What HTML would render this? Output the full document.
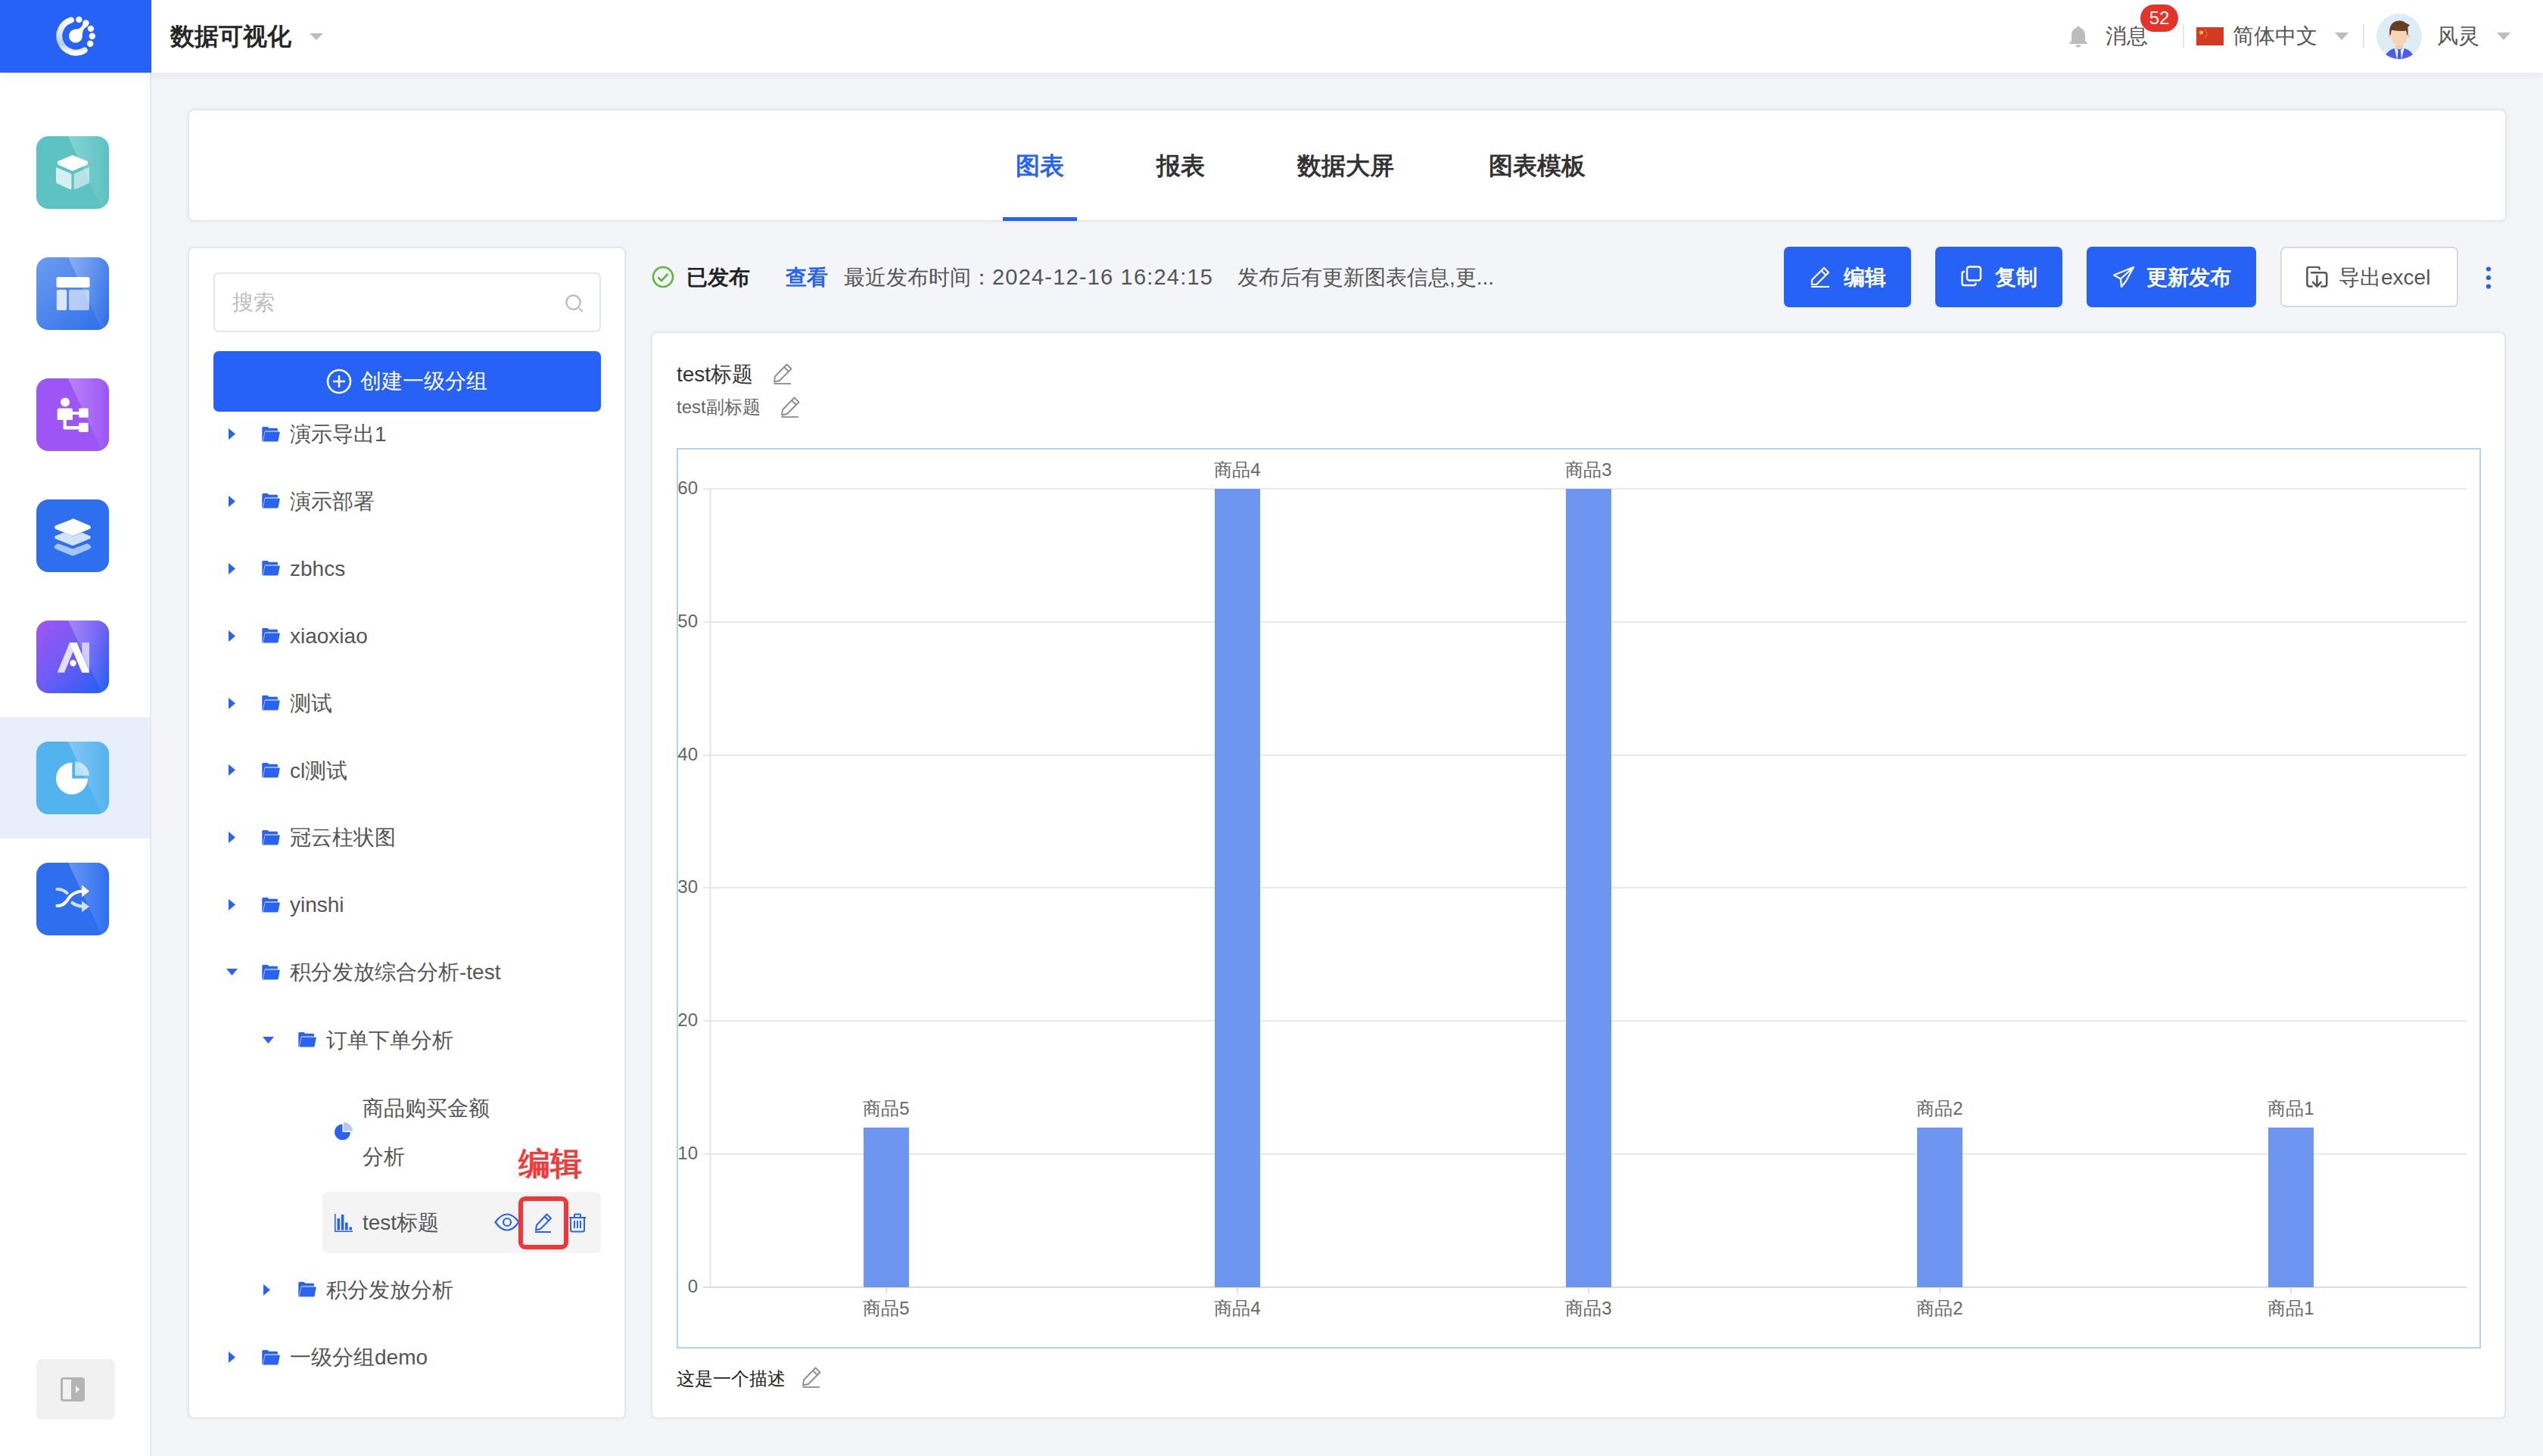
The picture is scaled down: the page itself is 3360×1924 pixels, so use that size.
<!DOCTYPE html>
<html><head><meta charset="utf-8">
<style>
*{box-sizing:border-box;margin:0;padding:0}
html,body{width:3360px;height:1924px;overflow:hidden}
body{background:#f3f5f8;font-family:"Liberation Sans",sans-serif;color:#333;position:relative}
.abs{position:absolute}
#hdr{left:0;top:0;width:3360px;height:96px;background:#fff;box-shadow:0 2px 14px rgba(30,40,70,0.08);z-index:5}
#logo{left:0;top:0;width:200px;height:96px;background:#2562f5}
#side{left:0;top:96px;width:200px;height:1828px;background:#fff;border-right:2px solid #e3e7ee;z-index:2}
.ico{position:absolute;left:48px;width:96px;height:96px}
.card{position:absolute;background:#fff;border:2px solid #e4e7ee;border-radius:8px;box-shadow:0 0 6px rgba(40,50,80,0.04)}
.t{position:absolute;white-space:nowrap;line-height:1}
</style></head><body>

<div id="hdr" class="abs">
  <div id="logo" class="abs">
    <svg class="abs" style="left:0;top:0" width="200" height="96" viewBox="0 0 200 96">
      <defs><linearGradient id="lg" x1="0" y1="0" x2="0" y2="1"><stop offset="0" stop-color="#fff"/><stop offset="0.75" stop-color="#b9cff7"/><stop offset="1" stop-color="#fff"/></linearGradient></defs>
      <path d="M94 26.5 A22 22 0 1 0 111.7 66.4" fill="none" stroke="url(#lg)" stroke-width="8" stroke-linecap="round"/>
      <circle cx="100" cy="47.6" r="9" fill="#fff"/>
      <path d="M98 39 Q107 39 109.8 31.5 L116.5 34.5 Q109 37 108.8 46 Z" fill="#fff"/>
      <circle cx="113.5" cy="30.4" r="4.2" fill="#fff"/>
      <circle cx="104.4" cy="25.9" r="4.2" fill="#fff"/>
      <circle cx="120" cy="37.9" r="4.2" fill="#fff"/>
      <circle cx="121.8" cy="47.8" r="4.2" fill="#fff"/>
      <circle cx="119.2" cy="57.8" r="4.2" fill="#fff"/>
    </svg>
  </div>
  <div class="t" style="left:225px;top:32px;font-size:32px;font-weight:bold;color:#262626">数据可视化</div>
  <svg class="abs" style="left:408px;top:43px" width="20" height="11"><path d="M1 1H19L10 10Z" fill="#bdbdbd"/></svg>

  <svg class="abs" style="left:2733px;top:33px" width="26" height="30" viewBox="0 0 26 30"><path d="M13 1.5 Q15 1.5 15 3.5 Q22 5.5 22 14 V21 L25 24 V25 H1 V24 L4 21 V14 Q4 5.5 11 3.5 Q11 1.5 13 1.5Z" fill="#bcbcbc"/><path d="M9.5 26.5 H16.5 Q16 29.5 13 29.5 Q10 29.5 9.5 26.5Z" fill="#bcbcbc"/></svg>
  <div class="t" style="left:2782px;top:34px;font-size:28px;color:#555">消息</div>
  <div class="abs" style="left:2828px;top:6px;width:50px;height:36px;border-radius:18px;background:#e5332a;color:#fff;font-size:24px;line-height:36px;text-align:center">52</div>
  <div class="abs" style="left:2884px;top:32px;width:2px;height:31px;background:#e6e6e6"></div>
  <svg class="abs" style="left:2902px;top:36px" width="36" height="24" viewBox="0 0 36 24"><rect width="36" height="24" fill="#d23a24"/><circle cx="6.5" cy="7" r="2.6" fill="#f2c230"/><circle cx="12" cy="3.5" r="0.9" fill="#f2c230" opacity=".7"/><circle cx="13.5" cy="6.5" r="0.9" fill="#f2c230" opacity=".7"/><circle cx="13.5" cy="10" r="0.9" fill="#f2c230" opacity=".7"/><circle cx="12" cy="13" r="0.9" fill="#f2c230" opacity=".7"/></svg>
  <div class="t" style="left:2950px;top:34px;font-size:28px;color:#555">简体中文</div>
  <svg class="abs" style="left:3085px;top:43px" width="18" height="10"><path d="M0 0H18L9 10Z" fill="#bdbdbd"/></svg>
  <div class="abs" style="left:3122px;top:32px;width:2px;height:31px;background:#e6e6e6"></div>
  <svg class="abs" style="left:3140px;top:18px" width="60" height="60" viewBox="0 0 60 60">
    <defs><clipPath id="av"><circle cx="30" cy="30" r="30"/></clipPath>
    <linearGradient id="suit" x1="0" y1="0" x2="0" y2="1"><stop offset="0" stop-color="#2b60f3"/><stop offset="1" stop-color="#7a55f0"/></linearGradient></defs>
    <g clip-path="url(#av)">
      <rect width="60" height="60" fill="#ddedf6"/>
      <path d="M9.8 58.5 Q14 48.5 23.5 46 L30 47 L37 46 Q46.5 48.5 50.3 58.5 Q40 63 30 63 Q20 63 9.8 58.5Z" fill="url(#suit)"/>
      <path d="M23.5 44.7 L30 49 L37 44.7 L33 60 H27Z" fill="#f2f2f2"/>
      <path d="M28.6 47.5 H31.8 L32.8 60 H27.6Z" fill="#3562f2"/>
      <rect x="25" y="38" width="10" height="8" rx="3" fill="#f2cda8"/>
      <ellipse cx="17.2" cy="29.6" rx="1.6" ry="2.4" fill="#f2cda8"/>
      <ellipse cx="42.8" cy="29.6" rx="1.6" ry="2.4" fill="#f2cda8"/>
      <path d="M18.6 22 Q18.6 33 21.5 37.5 Q25.5 42.5 30 42.5 Q34.5 42.5 38.5 37.5 Q41.4 33 41.4 22Z" fill="#f5d5b4"/>
      <path d="M17.3 28 Q16.5 20 19 15.5 Q23 9 31 9.2 Q36 9.5 39 12.5 L44 15 L41.3 18 Q42 23 41.4 28 L40 28 Q40 24 39 22.5 Q34 23.5 28 22.8 Q22 22.3 20.2 21.5 Q19 24 18.8 28Z" fill="#673e22"/>
    </g>
  </svg>
  <div class="t" style="left:3220px;top:34px;font-size:28px;color:#555">风灵</div>
  <svg class="abs" style="left:3299px;top:43px" width="18" height="10"><path d="M0 0H18L9 10Z" fill="#bdbdbd"/></svg>
</div>

<div id="side" class="abs">
  <div class="abs" style="left:0;top:852px;width:198px;height:160px;background:#e9eefd"></div>
  <svg class="ico" style="top:84px" viewBox="0 0 96 96">
    <defs>
      <linearGradient id="sh" x1="0" y1="0" x2="1" y2="0"><stop offset="0" stop-color="#fff" stop-opacity="0.28"/><stop offset="1" stop-color="#fff" stop-opacity="0"/></linearGradient>
      <clipPath id="rr"><rect width="96" height="96" rx="16"/></clipPath>
    </defs>
    <g clip-path="url(#rr)">
      <rect width="96" height="96" fill="#5cc2c2"/>
      <path d="M42 0H96V96H87Z" fill="url(#sh)"/>
      <path d="M47.8 25 L67.5 33 Q69 35.5 67.5 37.5 L47.8 46 L28.5 37.5 Q27 35.5 28.5 33 Z" fill="#fff"/>
      <path d="M26 41 L45 49 Q46.5 50 46.5 52 V68 Q46.5 71 44 70 L27.5 62.5 Q26 61.5 26 60 Z" fill="#fff" fill-opacity="0.75"/>
      <path d="M70 41 L51 49 Q49.5 50 49.5 52 V68 Q49.5 71 52 70 L68.5 62.5 Q70 61.5 70 60 Z" fill="#fff" fill-opacity="0.55"/>
    </g>
  </svg>
  <svg class="ico" style="top:244px" viewBox="0 0 96 96">
    <defs><linearGradient id="g2" x1="0" y1="0" x2="1" y2="1"><stop offset="0" stop-color="#6d9cf0"/><stop offset="1" stop-color="#2c6ee8"/></linearGradient></defs>
    <g clip-path="url(#rr)">
      <rect width="96" height="96" fill="url(#g2)"/>
      <path d="M42 0H96V96H87Z" fill="url(#sh)"/>
      <rect x="26.5" y="26" width="44" height="14" rx="2.5" fill="#fff"/>
      <rect x="26.8" y="42.8" width="13.4" height="27.2" rx="2.5" fill="#fff" fill-opacity="0.8"/>
      <rect x="43" y="42.8" width="27" height="27.2" rx="2.5" fill="#fff" fill-opacity="0.6"/>
    </g>
  </svg>
  <svg class="ico" style="top:404px" viewBox="0 0 96 96">
    <g clip-path="url(#rr)">
      <rect width="96" height="96" fill="#9d55f5"/>
      <path d="M42 0H96V96H87Z" fill="url(#sh)"/>
      <circle cx="38.1" cy="31.5" r="6" fill="#fff"/>
      <path d="M27.7 42 Q27.7 39.5 30.5 39.5 H45.5 Q48 39.5 48 42 V55 H27.7Z" fill="#fff"/>
      <rect x="47" y="44" width="10" height="4" fill="#fff"/>
      <rect x="56.2" y="39.5" width="12.5" height="12.2" rx="1" fill="#fff"/>
      <path d="M35.6 55 H39.8 V63 H57 V67.5 H37 Q35.6 67.5 35.6 66Z" fill="#fff"/>
      <rect x="56.2" y="58.8" width="12.5" height="12.2" rx="1" fill="#fff"/>
    </g>
  </svg>
  <svg class="ico" style="top:564px" viewBox="0 0 96 96">
    <g clip-path="url(#rr)">
      <rect width="96" height="96" fill="#2e6ff0"/>
      <path d="M28.9 58.8 L48.2 65.8 L67 58.8 L70.5 60.5 Q73.5 63 70.5 65 L50 73.5 Q48.2 74.3 46.4 73.5 L25.5 65 Q22.5 63 25.5 60.5 Z" fill="#a7c5f8" stroke="#a7c5f8" stroke-width="1" stroke-linejoin="round"/>
      <path d="M36.5 43.7 L48.2 48.5 L60.3 43.7 L70.5 48 Q73.5 50 70.5 52 L50 60.5 Q48.2 61.3 46.4 60.5 L25.5 52 Q22.5 50 25.5 48 Z" fill="#d3e2fb"/>
      <path d="M48 25.7 L25.5 34.5 Q22.5 36.8 25.5 39 L46 47.5 Q48 48.4 50 47.5 L70.5 39 Q73.5 36.8 70.5 34.5 L50 25.7 Q48 25 46 25.7 Z" fill="#fff"/>
    </g>
  </svg>
  <svg class="ico" style="top:724px" viewBox="0 0 96 96">
    <defs><linearGradient id="g5" x1="0" y1="0" x2="1" y2="1"><stop offset="0" stop-color="#a155f3"/><stop offset="0.5" stop-color="#6b5cf4"/><stop offset="1" stop-color="#1f5ef2"/></linearGradient></defs>
    <g clip-path="url(#rr)">
      <rect width="96" height="96" fill="url(#g5)"/>
      <path d="M42 0H96V96H87Z" fill="url(#sh)"/>
      <path d="M27.7 68.8 L44 29 H53.6 L37 68.8Z" fill="#fff" fill-opacity="0.8"/>
      <path d="M44 29 H53.6 L70 68.8 H60.3 L48.6 41Z" fill="#fff"/>
      <rect x="60.3" y="29" width="9.7" height="39.8" fill="#fff" fill-opacity="0.65"/>
      <circle cx="48.6" cy="56.2" r="4.2" fill="#fff"/>
    </g>
  </svg>
  <svg class="ico" style="top:884px" viewBox="0 0 96 96">
    <g clip-path="url(#rr)">
      <rect width="96" height="96" fill="#53b3ef"/>
      <path d="M42 0H96V96H87Z" fill="url(#sh)"/>
      <path d="M47.3 27.8 V48.8 H68 A21 21 0 1 1 47.3 27.8Z" fill="#fff"/>
      <path d="M51.1 26.2 A19 19 0 0 1 69.9 45 H51.1Z" fill="#fff" fill-opacity="0.6"/>
    </g>
  </svg>
  <svg class="ico" style="top:1044px" viewBox="0 0 96 96">
    <g clip-path="url(#rr)">
      <rect width="96" height="96" fill="#2e6ff0"/>
      <path d="M42 0H96V96H87Z" fill="url(#sh)"/>
      <path d="M27.5 35 Q35 35 40.5 40" stroke="#fff" stroke-opacity="0.8" stroke-width="4.2" fill="none" stroke-linecap="round"/>
      <path d="M27.5 57 Q37 57 42 48 Q47 39 61 37.5" stroke="#fff" stroke-width="4.2" fill="none" stroke-linecap="round"/>
      <path d="M60 29.5 L70 37.5 L60 45.5Z" fill="#fff"/>
      <path d="M47.5 53 Q52 56.5 61 58" stroke="#d4e2fb" stroke-width="4.2" fill="none" stroke-linecap="round"/>
      <path d="M60 50.5 L70 58 L60 65.5Z" fill="#d4e2fb"/>
    </g>
  </svg>
  <div class="abs" style="left:48px;top:1700px;width:104px;height:80px;background:#f1f1f1;border-radius:8px">
    <svg class="abs" style="left:32px;top:24px" width="32" height="32" viewBox="0 0 32 32"><rect x="0" y="0" width="32" height="32" rx="4" fill="#b4b4b4"/><rect x="3" y="3" width="11" height="26" fill="#f1f1f1"/><path d="M20 11L25.4 16L20 21Z" fill="#f1f1f1"/></svg>
  </div>
</div>

<!-- tab card -->
<div class="card" style="left:248px;top:144px;width:3064px;height:149px"></div>
<div class="t" style="left:1342px;top:203px;font-size:32px;font-weight:bold;color:#2562f5">图表</div>
<div class="t" style="left:1528px;top:203px;font-size:32px;font-weight:bold;color:#333">报表</div>
<div class="t" style="left:1714px;top:203px;font-size:32px;font-weight:bold;color:#333">数据大屏</div>
<div class="t" style="left:1967px;top:203px;font-size:32px;font-weight:bold;color:#333">图表模板</div>
<div class="abs" style="left:1325px;top:287px;width:98px;height:5px;background:#2562f5"></div>
<!-- tree card -->
<div class="card" style="left:248px;top:326px;width:579px;height:1549px"></div>
<div class="abs" style="left:282px;top:360px;width:512px;height:79px;border:2px solid #e3e6ec;border-radius:7px;background:#fff"></div>
<div class="t" style="left:307px;top:386px;font-size:28px;color:#bdbdbd">搜索</div>
<svg class="abs" style="left:746px;top:388px" width="26" height="26" viewBox="0 0 26 26"><circle cx="11.5" cy="11.5" r="9.2" fill="none" stroke="#bdbdbd" stroke-width="2.4"/><path d="M20 20L23 23" stroke="#bdbdbd" stroke-width="2.4" stroke-linecap="round"/></svg>
<div class="abs" style="left:282px;top:464px;width:512px;height:80px;background:#2562f5;border-radius:7px"></div>
<svg class="abs" style="left:431px;top:487px" width="34" height="34" viewBox="0 0 34 34"><circle cx="17" cy="17" r="15" fill="none" stroke="#fff" stroke-width="2.6"/><path d="M17 9V25M9 17H25" stroke="#fff" stroke-width="2.6"/></svg>
<div class="t" style="left:476px;top:490px;font-size:28px;color:#fff">创建一级分组</div>
<svg class="abs" style="left:302px;top:566px" width="10" height="15" viewBox="0 0 10 15"><path d="M0 0L9 7.5L0 15Z" fill="#2a62f2"/></svg>
<svg class="abs" style="left:346px;top:564px" width="24" height="20" viewBox="0 0 24 20"><path d="M0.3 1.5Q0.3 0 1.8 0H7.5L9.3 1.8H19.5Q21 1.8 21 3.3V5.5H4L1 19.5H0.3Z" fill="#2a62f2"/><path d="M4.3 6.5H22.8Q24 6.5 23.7 7.8L21.6 18.4Q21.3 19.5 20 19.5H1.6Z" fill="#2a62f2"/></svg>
<div class="t" style="left:383px;top:560.0px;font-size:28px;color:#555">演示导出1</div>
<svg class="abs" style="left:302px;top:655px" width="10" height="15" viewBox="0 0 10 15"><path d="M0 0L9 7.5L0 15Z" fill="#2a62f2"/></svg>
<svg class="abs" style="left:346px;top:652px" width="24" height="20" viewBox="0 0 24 20"><path d="M0.3 1.5Q0.3 0 1.8 0H7.5L9.3 1.8H19.5Q21 1.8 21 3.3V5.5H4L1 19.5H0.3Z" fill="#2a62f2"/><path d="M4.3 6.5H22.8Q24 6.5 23.7 7.8L21.6 18.4Q21.3 19.5 20 19.5H1.6Z" fill="#2a62f2"/></svg>
<div class="t" style="left:383px;top:648.9px;font-size:28px;color:#555">演示部署</div>
<svg class="abs" style="left:302px;top:744px" width="10" height="15" viewBox="0 0 10 15"><path d="M0 0L9 7.5L0 15Z" fill="#2a62f2"/></svg>
<svg class="abs" style="left:346px;top:741px" width="24" height="20" viewBox="0 0 24 20"><path d="M0.3 1.5Q0.3 0 1.8 0H7.5L9.3 1.8H19.5Q21 1.8 21 3.3V5.5H4L1 19.5H0.3Z" fill="#2a62f2"/><path d="M4.3 6.5H22.8Q24 6.5 23.7 7.8L21.6 18.4Q21.3 19.5 20 19.5H1.6Z" fill="#2a62f2"/></svg>
<div class="t" style="left:383px;top:737.8px;font-size:28px;color:#555">zbhcs</div>
<svg class="abs" style="left:302px;top:833px" width="10" height="15" viewBox="0 0 10 15"><path d="M0 0L9 7.5L0 15Z" fill="#2a62f2"/></svg>
<svg class="abs" style="left:346px;top:830px" width="24" height="20" viewBox="0 0 24 20"><path d="M0.3 1.5Q0.3 0 1.8 0H7.5L9.3 1.8H19.5Q21 1.8 21 3.3V5.5H4L1 19.5H0.3Z" fill="#2a62f2"/><path d="M4.3 6.5H22.8Q24 6.5 23.7 7.8L21.6 18.4Q21.3 19.5 20 19.5H1.6Z" fill="#2a62f2"/></svg>
<div class="t" style="left:383px;top:826.7px;font-size:28px;color:#555">xiaoxiao</div>
<svg class="abs" style="left:302px;top:922px" width="10" height="15" viewBox="0 0 10 15"><path d="M0 0L9 7.5L0 15Z" fill="#2a62f2"/></svg>
<svg class="abs" style="left:346px;top:919px" width="24" height="20" viewBox="0 0 24 20"><path d="M0.3 1.5Q0.3 0 1.8 0H7.5L9.3 1.8H19.5Q21 1.8 21 3.3V5.5H4L1 19.5H0.3Z" fill="#2a62f2"/><path d="M4.3 6.5H22.8Q24 6.5 23.7 7.8L21.6 18.4Q21.3 19.5 20 19.5H1.6Z" fill="#2a62f2"/></svg>
<div class="t" style="left:383px;top:915.6px;font-size:28px;color:#555">测试</div>
<svg class="abs" style="left:302px;top:1010px" width="10" height="15" viewBox="0 0 10 15"><path d="M0 0L9 7.5L0 15Z" fill="#2a62f2"/></svg>
<svg class="abs" style="left:346px;top:1008px" width="24" height="20" viewBox="0 0 24 20"><path d="M0.3 1.5Q0.3 0 1.8 0H7.5L9.3 1.8H19.5Q21 1.8 21 3.3V5.5H4L1 19.5H0.3Z" fill="#2a62f2"/><path d="M4.3 6.5H22.8Q24 6.5 23.7 7.8L21.6 18.4Q21.3 19.5 20 19.5H1.6Z" fill="#2a62f2"/></svg>
<div class="t" style="left:383px;top:1004.5px;font-size:28px;color:#555">cl测试</div>
<svg class="abs" style="left:302px;top:1099px" width="10" height="15" viewBox="0 0 10 15"><path d="M0 0L9 7.5L0 15Z" fill="#2a62f2"/></svg>
<svg class="abs" style="left:346px;top:1097px" width="24" height="20" viewBox="0 0 24 20"><path d="M0.3 1.5Q0.3 0 1.8 0H7.5L9.3 1.8H19.5Q21 1.8 21 3.3V5.5H4L1 19.5H0.3Z" fill="#2a62f2"/><path d="M4.3 6.5H22.8Q24 6.5 23.7 7.8L21.6 18.4Q21.3 19.5 20 19.5H1.6Z" fill="#2a62f2"/></svg>
<div class="t" style="left:383px;top:1093.4px;font-size:28px;color:#555">冠云柱状图</div>
<svg class="abs" style="left:302px;top:1188px" width="10" height="15" viewBox="0 0 10 15"><path d="M0 0L9 7.5L0 15Z" fill="#2a62f2"/></svg>
<svg class="abs" style="left:346px;top:1186px" width="24" height="20" viewBox="0 0 24 20"><path d="M0.3 1.5Q0.3 0 1.8 0H7.5L9.3 1.8H19.5Q21 1.8 21 3.3V5.5H4L1 19.5H0.3Z" fill="#2a62f2"/><path d="M4.3 6.5H22.8Q24 6.5 23.7 7.8L21.6 18.4Q21.3 19.5 20 19.5H1.6Z" fill="#2a62f2"/></svg>
<div class="t" style="left:383px;top:1182.3px;font-size:28px;color:#555">yinshi</div>
<svg class="abs" style="left:299px;top:1280px" width="15" height="10" viewBox="0 0 15 10"><path d="M0 0H15L7.5 9Z" fill="#2a62f2"/></svg>
<svg class="abs" style="left:346px;top:1275px" width="24" height="20" viewBox="0 0 24 20"><path d="M0.3 1.5Q0.3 0 1.8 0H7.5L9.3 1.8H19.5Q21 1.8 21 3.3V5.5H4L1 19.5H0.3Z" fill="#2a62f2"/><path d="M4.3 6.5H22.8Q24 6.5 23.7 7.8L21.6 18.4Q21.3 19.5 20 19.5H1.6Z" fill="#2a62f2"/></svg>
<div class="t" style="left:383px;top:1271.2px;font-size:28px;color:#555">积分发放综合分析-test</div>
<svg class="abs" style="left:347px;top:1370px" width="15" height="10" viewBox="0 0 15 10"><path d="M0 0H15L7.5 9Z" fill="#2a62f2"/></svg>
<svg class="abs" style="left:394px;top:1364px" width="24" height="20" viewBox="0 0 24 20"><path d="M0.3 1.5Q0.3 0 1.8 0H7.5L9.3 1.8H19.5Q21 1.8 21 3.3V5.5H4L1 19.5H0.3Z" fill="#2a62f2"/><path d="M4.3 6.5H22.8Q24 6.5 23.7 7.8L21.6 18.4Q21.3 19.5 20 19.5H1.6Z" fill="#2a62f2"/></svg>
<div class="t" style="left:431px;top:1361px;font-size:28px;color:#555">订单下单分析</div>
<div class="t" style="left:479px;top:1450.5px;font-size:28px;color:#555">商品购买金额</div>
<div class="t" style="left:479px;top:1514.5px;font-size:28px;color:#555">分析</div>
<svg class="abs" style="left:442px;top:1483px" width="24" height="24" viewBox="0 0 24 24"><path d="M10.5 2.5V13H21A10.5 10.5 0 1 1 10.5 2.5Z" fill="#2a62f2"/><path d="M12 0A12 12 0 0 1 24 11.5H12Z" fill="#b3c9f5"/></svg>
<div class="abs" style="left:426px;top:1575px;width:368px;height:81px;background:#f4f4f5;border-radius:7px"></div>
<svg class="abs" style="left:442px;top:1604px" width="24" height="24" viewBox="0 0 24 24"><path d="M0.8 0V23.2H24" fill="none" stroke="#2a62f2" stroke-width="1.6"/><rect x="3.5" y="6" width="3.6" height="15.5" fill="#2a62f2"/><rect x="8.8" y="1" width="3.6" height="20.5" fill="#2a62f2"/><rect x="14" y="11.5" width="3.6" height="10" fill="#2a62f2"/><rect x="19.4" y="17.5" width="3.6" height="4" fill="#2a62f2"/></svg>
<div class="t" style="left:479px;top:1602px;font-size:28px;color:#555">test标题</div>
<svg class="abs" style="left:653px;top:1603px" width="34" height="24" viewBox="0 0 34 24"><path d="M1.5 12Q9 1.5 17 1.5Q25 1.5 32.5 12Q25 22.5 17 22.5Q9 22.5 1.5 12Z" fill="none" stroke="#2a62f2" stroke-width="2.2"/><circle cx="17" cy="12" r="5" fill="none" stroke="#2a62f2" stroke-width="2.2"/></svg>
<svg class="abs" style="left:706px;top:1603px" width="24" height="26" viewBox="0 0 24 26"><path d="M16.5 1.5L22 7L8 21L2 22.5L3 16Z M13.5 4.5L19 10" fill="none" stroke="#2a62f2" stroke-width="2" stroke-linejoin="round"/><path d="M1 25H22" stroke="#2a62f2" stroke-width="2"/></svg>
<svg class="abs" style="left:751px;top:1603px" width="24" height="26" viewBox="0 0 24 26"><path d="M1 6H23M8 6V3Q8 1.5 9.5 1.5H14.5Q16 1.5 16 3V6" fill="none" stroke="#2a62f2" stroke-width="2"/><path d="M3 6.5V22.5Q3 24.5 5 24.5H19Q21 24.5 21 22.5V6.5" fill="none" stroke="#2a62f2" stroke-width="2"/><path d="M8 10V20M12 10V20M16 10V20" stroke="#2a62f2" stroke-width="2"/></svg>
<div class="abs" style="left:685px;top:1581px;width:66px;height:70px;border:6px solid #f33535;border-radius:9px"></div>
<div class="t" style="left:685px;top:1517px;font-size:42px;font-weight:bold;color:#f33a3a">编辑</div>
<svg class="abs" style="left:348px;top:1697px" width="10" height="15" viewBox="0 0 10 15"><path d="M0 0L9 7.5L0 15Z" fill="#2a62f2"/></svg>
<svg class="abs" style="left:394px;top:1694px" width="24" height="20" viewBox="0 0 24 20"><path d="M0.3 1.5Q0.3 0 1.8 0H7.5L9.3 1.8H19.5Q21 1.8 21 3.3V5.5H4L1 19.5H0.3Z" fill="#2a62f2"/><path d="M4.3 6.5H22.8Q24 6.5 23.7 7.8L21.6 18.4Q21.3 19.5 20 19.5H1.6Z" fill="#2a62f2"/></svg>
<div class="t" style="left:431px;top:1691px;font-size:28px;color:#555">积分发放分析</div>
<svg class="abs" style="left:302px;top:1786px" width="10" height="15" viewBox="0 0 10 15"><path d="M0 0L9 7.5L0 15Z" fill="#2a62f2"/></svg>
<svg class="abs" style="left:346px;top:1784px" width="24" height="20" viewBox="0 0 24 20"><path d="M0.3 1.5Q0.3 0 1.8 0H7.5L9.3 1.8H19.5Q21 1.8 21 3.3V5.5H4L1 19.5H0.3Z" fill="#2a62f2"/><path d="M4.3 6.5H22.8Q24 6.5 23.7 7.8L21.6 18.4Q21.3 19.5 20 19.5H1.6Z" fill="#2a62f2"/></svg>
<div class="t" style="left:383px;top:1780px;font-size:28px;color:#555">一级分组demo</div>
<!-- status -->
<svg class="abs" style="left:861px;top:351px" width="30" height="30" viewBox="0 0 30 30"><circle cx="15" cy="15" r="13" fill="none" stroke="#5fb43d" stroke-width="2.6"/><path d="M8.5 15.5L13 20L21.5 11" fill="none" stroke="#5fb43d" stroke-width="2.6"/></svg>
<div class="t" style="left:907px;top:353px;font-size:28px;font-weight:bold;color:#222">已发布</div>
<div class="t" style="left:1038px;top:353px;font-size:28px;font-weight:bold;color:#2562f5">查看</div>
<div class="t" style="left:1115px;top:353px;font-size:28px;color:#555">最近发布时间：</div>
<div class="t" style="left:1311px;top:352px;font-size:29px;color:#555;letter-spacing:1.2px">2024-12-16 16:24:15</div>
<div class="t" style="left:1635px;top:353px;font-size:28px;color:#555">发布后有更新图表信息,更...</div>
<div class="abs" style="left:2357px;top:326px;width:168px;height:80px;background:#2562f5;border-radius:7px"></div>
<svg class="abs" style="left:2391px;top:352px" width="28" height="28" viewBox="0 0 28 28"><path d="M19 2L25 8L9 24H3V18Z M15.5 5.5L21.5 11.5" fill="none" stroke="#fff" stroke-width="2.2" stroke-linejoin="round"/><path d="M2 27H26" stroke="#fff" stroke-width="2.2"/></svg>
<div class="t" style="left:2436px;top:353px;font-size:28px;color:#fff;font-weight:bold">编辑</div>
<div class="abs" style="left:2557px;top:326px;width:168px;height:80px;background:#2562f5;border-radius:7px"></div>
<svg class="abs" style="left:2591px;top:351px" width="28" height="28" viewBox="0 0 28 28"><rect x="8" y="1.5" width="18" height="18" rx="3" fill="none" stroke="#fff" stroke-width="2.4"/><path d="M5 8H4Q1.5 8 1.5 10.5V23.5Q1.5 26 4 26H17Q19.5 26 19.5 23.5V22.5" fill="none" stroke="#fff" stroke-width="2.4"/></svg>
<div class="t" style="left:2636px;top:353px;font-size:28px;color:#fff;font-weight:bold">复制</div>
<div class="abs" style="left:2757px;top:326px;width:224px;height:80px;background:#2562f5;border-radius:7px"></div>
<svg class="abs" style="left:2791px;top:351px" width="30" height="30" viewBox="0 0 30 30"><path d="M28 2L2 12.5L11 17.5L12 28L18 20.5Z M11 17.5L28 2" fill="none" stroke="#fff" stroke-width="2.2" stroke-linejoin="round"/></svg>
<div class="t" style="left:2836px;top:353px;font-size:28px;color:#fff;font-weight:bold">更新发布</div>
<div class="abs" style="left:3013px;top:326px;width:235px;height:80px;background:#fff;border:2px solid #d9d9d9;border-radius:7px"></div>
<svg class="abs" style="left:3046px;top:352px" width="30" height="30" viewBox="0 0 30 30"><path d="M8.7 26.6H5.4Q2.4 26.6 2.4 23.6V3.2Q2.4 0.8 5.4 0.8H16Q18.8 0.8 18.8 3.6" fill="none" stroke="#555" stroke-width="2.5" stroke-linecap="round"/><path d="M8.1 8.3H25.2Q28.2 8.3 28.2 11.3V23.6Q28.2 26.6 25.2 26.6H21.3" fill="none" stroke="#555" stroke-width="2.5" stroke-linecap="round"/><path d="M15.4 12.7V26.6M9.9 20.9L15.4 26.6L20.6 20.9" fill="none" stroke="#555" stroke-width="2.5" stroke-linejoin="round" stroke-linecap="round"/></svg>
<div class="t" style="left:3090px;top:353px;font-size:28px;color:#555">导出excel</div>
<svg class="abs" style="left:3282px;top:351px" width="12" height="34" viewBox="0 0 12 34"><circle cx="6" cy="4.5" r="3.1" fill="#2562f5"/><circle cx="6" cy="16" r="3.1" fill="#2562f5"/><circle cx="6" cy="27.5" r="3.1" fill="#2562f5"/></svg>
<!-- chart card -->
<div class="card" style="left:860px;top:438px;width:2451px;height:1437px"></div>
<div class="t" style="left:894px;top:481px;font-size:28px;color:#333">test标题</div>
<svg class="abs" style="left:1020px;top:480px" width="28" height="28" viewBox="0 0 28 28"><path d="M19.5 1.5L25.5 7.5L10 23L3 24.5L4 17.5Z M16 5L22 11" fill="none" stroke="#8c8c8c" stroke-width="1.8" stroke-linejoin="round"/><path d="M2.5 27H25" stroke="#8c8c8c" stroke-width="1.8"/></svg>
<div class="t" style="left:894px;top:526px;font-size:24px;color:#666">test副标题</div>
<svg class="abs" style="left:1030px;top:524px" width="28" height="28" viewBox="0 0 28 28"><path d="M19.5 1.5L25.5 7.5L10 23L3 24.5L4 17.5Z M16 5L22 11" fill="none" stroke="#8c8c8c" stroke-width="1.8" stroke-linejoin="round"/><path d="M2.5 27H25" stroke="#8c8c8c" stroke-width="1.8"/></svg>
<div class="abs" style="left:894px;top:592px;width:2384px;height:1190px;border:2px solid #b2d6e6"></div>
<svg class="abs" style="left:0;top:0" width="3360" height="1924"><rect x="929" y="1700" width="2330" height="2" fill="#dcdcdc"/><rect x="929" y="1524" width="2330" height="2" fill="#e8e8e8"/><rect x="929" y="1348" width="2330" height="2" fill="#e8e8e8"/><rect x="929" y="1172" width="2330" height="2" fill="#e8e8e8"/><rect x="929" y="997" width="2330" height="2" fill="#e8e8e8"/><rect x="929" y="821" width="2330" height="2" fill="#e8e8e8"/><rect x="929" y="645" width="2330" height="2" fill="#e8e8e8"/><rect x="937.5" y="646" width="2" height="1055" fill="#e6e6e6"/><rect x="1141" y="1490.0" width="60" height="211.0" fill="#6e96f0"/><rect x="1170" y="1701" width="2" height="8" fill="#e0e0e0"/><rect x="1605" y="646.0" width="60" height="1055.0" fill="#6e96f0"/><rect x="1634" y="1701" width="2" height="8" fill="#e0e0e0"/><rect x="2069" y="646.0" width="60" height="1055.0" fill="#6e96f0"/><rect x="2098" y="1701" width="2" height="8" fill="#e0e0e0"/><rect x="2533" y="1490.0" width="60" height="211.0" fill="#6e96f0"/><rect x="2562" y="1701" width="2" height="8" fill="#e0e0e0"/><rect x="2997" y="1490.0" width="60" height="211.0" fill="#6e96f0"/><rect x="3026" y="1701" width="2" height="8" fill="#e0e0e0"/></svg>
<div class="t" style="left:822px;width:100px;text-align:right;top:1688px;font-size:24px;color:#666">0</div>
<div class="t" style="left:822px;width:100px;text-align:right;top:1512px;font-size:24px;color:#666">10</div>
<div class="t" style="left:822px;width:100px;text-align:right;top:1336px;font-size:24px;color:#666">20</div>
<div class="t" style="left:822px;width:100px;text-align:right;top:1160px;font-size:24px;color:#666">30</div>
<div class="t" style="left:822px;width:100px;text-align:right;top:985px;font-size:24px;color:#666">40</div>
<div class="t" style="left:822px;width:100px;text-align:right;top:809px;font-size:24px;color:#666">50</div>
<div class="t" style="left:822px;width:100px;text-align:right;top:633px;font-size:24px;color:#666">60</div>
<div class="t" style="left:1091px;width:160px;text-align:center;top:1453px;font-size:24px;color:#666">商品5</div>
<div class="t" style="left:1091px;width:160px;text-align:center;top:1717px;font-size:24px;color:#666">商品5</div>
<div class="t" style="left:1555px;width:160px;text-align:center;top:609px;font-size:24px;color:#666">商品4</div>
<div class="t" style="left:1555px;width:160px;text-align:center;top:1717px;font-size:24px;color:#666">商品4</div>
<div class="t" style="left:2019px;width:160px;text-align:center;top:609px;font-size:24px;color:#666">商品3</div>
<div class="t" style="left:2019px;width:160px;text-align:center;top:1717px;font-size:24px;color:#666">商品3</div>
<div class="t" style="left:2483px;width:160px;text-align:center;top:1453px;font-size:24px;color:#666">商品2</div>
<div class="t" style="left:2483px;width:160px;text-align:center;top:1717px;font-size:24px;color:#666">商品2</div>
<div class="t" style="left:2947px;width:160px;text-align:center;top:1453px;font-size:24px;color:#666">商品1</div>
<div class="t" style="left:2947px;width:160px;text-align:center;top:1717px;font-size:24px;color:#666">商品1</div>
<div class="t" style="left:894px;top:1810px;font-size:24px;color:#222">这是一个描述</div>
<svg class="abs" style="left:1058px;top:1806px" width="28" height="28" viewBox="0 0 28 28"><path d="M19.5 1.5L25.5 7.5L10 23L3 24.5L4 17.5Z M16 5L22 11" fill="none" stroke="#8c8c8c" stroke-width="1.8" stroke-linejoin="round"/><path d="M2.5 27H25" stroke="#8c8c8c" stroke-width="1.8"/></svg>
</body></html>
